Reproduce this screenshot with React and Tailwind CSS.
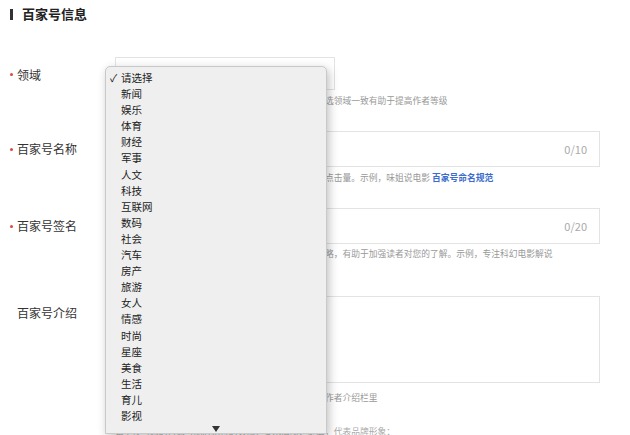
import React from "react";

const items = ["新闻","娱乐","体育","财经","军事","人文","科技","互联网","数码","社会","汽车","房产","旅游","女人","情感","时尚","星座","美食","生活","育儿","影视"];

function Label({ text, required }) {
  return (
    <div className="w-[105px] shrink-0 flex items-center text-[12px] text-[#333]">
      {required ? <span className="w-[3px] h-[3px] rounded-full bg-[#e0463c] mr-[4px]" /> : <span className="w-[7px]" />}
      <span>{text}</span>
    </div>
  );
}

function Hint({ children, className = "" }) {
  return (
    <div className={"pl-[105px] text-[8.75px] leading-[12px] text-[#999] whitespace-nowrap " + className}>{children}</div>
  );
}

export default function App() {
  return (
    <div className="relative w-[630px] h-[435px] overflow-hidden bg-white" style={{ fontFamily: '"Noto Sans CJK SC", "Noto Sans", sans-serif' }}>
      <div className="pl-[10px] pt-[6px]">
        <div className="flex items-center h-[16px]">
          <div className="w-[3px] h-[11px] bg-[#333]" />
          <div className="ml-[9px] text-[13px] font-bold text-[#222] leading-[16px]">百家号信息</div>
        </div>

        <div className="flex mt-[35px] h-[33px]">
          <div className="flex items-center pt-[2px]"><Label text="领域" required /></div>
          <div className="w-[220px] h-[33px] border border-[#e3e3e3] bg-white" />
        </div>
        <Hint className="mt-[5px]">请选择与您创作内容最相关的领域，您发布的内容与所选领域一致有助于提高作者等级</Hint>

        <div className="flex mt-[24px] h-[36px]">
          <div className="flex items-center"><Label text="百家号名称" required /></div>
          <div className="w-[485px] h-[36px] border border-[#e3e3e3] flex items-center justify-end pr-[12px] text-[11px] text-[#aaa]">0/10</div>
        </div>
        <Hint className="mt-[5px]">好名称需简洁易记，与领域相关，有助于提升曝光和增点击量。示例，味姐说电影 <span className="text-[#3d6dcc] font-bold">百家号命名规范</span></Hint>

        <div className="flex mt-[24px] h-[36px]">
          <div className="flex items-center"><Label text="百家号签名" required /></div>
          <div className="w-[485px] h-[36px] border border-[#e3e3e3] flex items-center justify-end pr-[12px] text-[11px] text-[#aaa]">0/20</div>
        </div>
        <Hint className="mt-[4px]">请用一句话介绍您的百家号的创作领域、风格与运营策略，有助于加强读者对您的了解。示例，专注科幻电影解说</Hint>

        <div className="flex mt-[36px] h-[87px]">
          <div className="pt-[8px]"><Label text="百家号介绍" /></div>
          <div className="w-[485px] h-[87px] border border-[#e3e3e3]" />
        </div>
        <Hint className="mt-[9px]">介绍会展示在您的百家号个人主页、文章详情页底部的作者介绍栏里</Hint>
        <Hint className="mt-[22px] text-[#aaa]">请上传与您的百家号品牌相符的头像，要求清晰、健康，代表品牌形象；</Hint>
      </div>

      <div className="absolute left-[105px] top-[66px] w-[222px] h-[368px] bg-[#efefef] border border-[#c9c9c9] rounded-t-[5px] shadow-[2px_3px_10px_rgba(0,0,0,0.25)] pt-[3px] text-[10.5px] text-[#222]">
        <div className="flex items-center h-[16.1px] leading-[16px]">
          <span className="w-[15px] pl-[4px] text-[10.5px]">✓</span>
          <span>请选择</span>
        </div>
        {items.map((t) => (
          <div key={t} className="h-[16.1px] leading-[16px] pl-[15px]">{t}</div>
        ))}
        <div className="flex justify-center pt-[2px]">
          <svg width="8" height="6" viewBox="0 0 8 6"><path d="M0 0 L8 0 L4 6 Z" fill="#333" /></svg>
        </div>
      </div>
    </div>
  );
}
